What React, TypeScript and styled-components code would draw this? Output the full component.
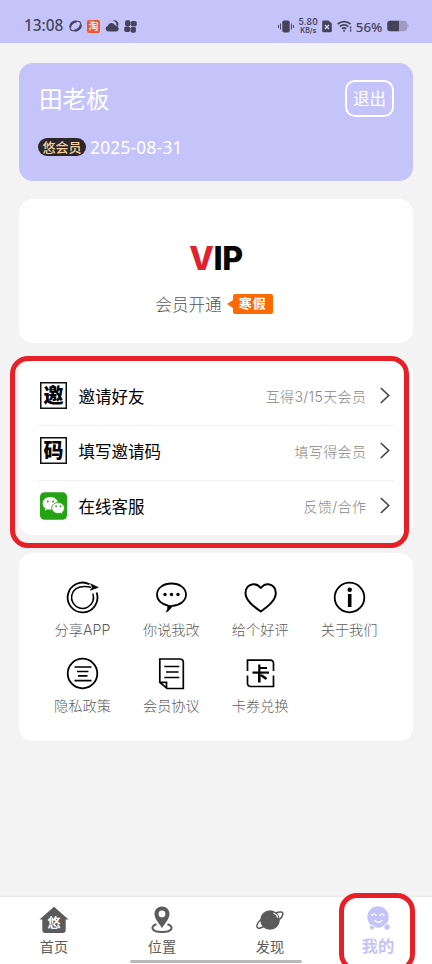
import React from "react";
import styled, { createGlobalStyle } from "styled-components";

const LILAC = "#c5c4fa";
const INK = "#45435c";
const NAV = "#5b5b5b";

const Global = createGlobalStyle`
  * { box-sizing: border-box; }
  html, body { margin: 0; height: 100%; overflow: hidden; }
  body { font-family: "Noto Sans CJK SC", sans-serif; background: #f3f3f3; }
  svg { display: block; flex: none; }
`;

const Screen = styled.div`
  position: relative;
  width: 432px;
  height: 964px;
  overflow: hidden;
  display: flex;
  flex-direction: column;
  background: #f3f3f3;
`;

const StatusBar = styled.header`
  height: 43px;
  flex: none;
  display: flex;
  justify-content: space-between;
  align-items: flex-start;
  padding: 14px 23px 0 24px;
  background: ${LILAC};
  color: ${INK};
`;
const StatusGroup = styled.div<{ $gap: number }>`
  display: flex;
  align-items: center;
  height: 24px;
  gap: ${(p) => p.$gap}px;
`;
const Clock = styled.span`
  width: 40px;
  font: 500 15.4px/24px "Noto Sans", sans-serif;
  white-space: nowrap;
`;
const Speed = styled.div`
  width: 20px;
  display: flex;
  flex-direction: column;
  align-items: center;
  font-family: Inter, sans-serif;
  font-weight: 600;
  white-space: nowrap;
`;
const SpeedValue = styled.span`
  font-size: 8.4px;
  line-height: 9px;
  letter-spacing: 0.3px;
`;
const SpeedUnit = styled.span`
  font-size: 7px;
  line-height: 8px;
`;
const Percent = styled.span`
  width: 27px;
  font: 500 13.3px/24px "Noto Sans", sans-serif;
  padding-top: 1px;
  white-space: nowrap;
`;

const Content = styled.main`
  flex: 1;
  display: flex;
  flex-direction: column;
  gap: 18px;
  padding: 19.5px 19px 0;
`;
const Card = styled.section<{ $h: number }>`
  height: ${(p) => p.$h}px;
  border-radius: 14px;
  background: #fff;
`;
const Profile = styled(Card)`
  display: flex;
  justify-content: space-between;
  align-items: flex-start;
  padding: 17px 19px 0 20px;
  background: ${LILAC};
  color: #fff;
`;
const UserName = styled.h1`
  margin: 2px 0 0;
  font-size: 23.5px;
  line-height: 32px;
  font-weight: 400;
`;
const Membership = styled.div`
  display: flex;
  align-items: center;
  gap: 4px;
  height: 24px;
  margin: 21px 0 0 -1px;
`;
const MemberBadge = styled.span`
  width: 48px;
  height: 18px;
  border-radius: 9px;
  background: #2b2728;
  color: #f6cf97;
  font-size: 13px;
  font-weight: 500;
  line-height: 17px;
  text-align: center;
`;
const Expiry = styled.span`
  font: 400 17.2px/24px "Noto Sans", sans-serif;
  letter-spacing: 0.3px;
  padding-top: 2px;
`;
const Logout = styled.button`
  width: 49px;
  height: 37px;
  padding: 0;
  border: 2px solid #fff;
  border-radius: 10px;
  background: none;
  color: #fff;
  font: 400 16.5px/32px "Noto Sans CJK SC", sans-serif;
`;

const VipCard = styled(Card)`
  display: flex;
  flex-direction: column;
  align-items: center;
  padding-top: 40px;
`;
const VipLogo = styled.div`
  font: 800 32px/40px Inter, sans-serif;
  letter-spacing: -0.3px;
  color: #060606;
`;
const VipAccent = styled.span`
  color: #e0222f;
`;
const VipLine = styled.div`
  display: flex;
  align-items: center;
  height: 24px;
  margin-top: 13px;
  padding-right: 4px;
`;
const VipText = styled.span`
  font-size: 16.6px;
  font-weight: 300;
  line-height: 24px;
  color: #555;
  margin-right: 5px;
`;
const Promo = styled.span`
  width: 40px;
  height: 20px;
  border-radius: 2px;
  background: #ff6a00;
  color: #fff;
  font: 700 13px/18px "Noto Sans CJK SC", sans-serif;
  letter-spacing: 1px;
  text-align: center;
`;

const MenuCard = styled(Card)`
  padding: 10px 19px 0;
`;
const MenuRow = styled.div`
  display: flex;
  align-items: center;
  height: 55.2px;
  padding: 0 4px 5px 2px;
  border-bottom: 1px solid #efefef;
  &:last-child { border-bottom-color: transparent; }
`;
const CharIcon = styled.span`
  width: 27px;
  height: 27px;
  box-shadow: inset 0 0 0 1.5px #111;
  font-size: 20px;
  font-weight: 900;
  line-height: 25.5px;
  text-align: center;
  color: #000;
`;
const MenuTitle = styled.span`
  flex: 1;
  margin-left: 11.5px;
  font-size: 16.5px;
  line-height: 24px;
  color: #000;
`;
const MenuHint = styled.span`
  margin-right: 13.7px;
  padding-top: 2px;
  font-family: Inter, "Noto Sans CJK SC", sans-serif;
  font-size: 14px;
  font-weight: 300;
  line-height: 24px;
  letter-spacing: 0.38px;
  color: #858585;
`;

const Tools = styled(Card)`
  display: grid;
  grid-template-columns: repeat(4, 88.9px);
  grid-auto-rows: 76px;
  padding: 28px 19px 0;
`;
const Tool = styled.div`
  display: flex;
  flex-direction: column;
  align-items: center;
`;
const ToolLabel = styled.span`
  margin-top: 4px;
  font-family: Inter, "Noto Sans CJK SC", sans-serif;
  font-size: 14.2px;
  font-weight: 300;
  line-height: 24px;
  color: #5c5c5c;
`;

const TabBar = styled.nav`
  height: 67.5px;
  flex: none;
  display: grid;
  grid-template-columns: repeat(4, 1fr);
  background: #fff;
  box-shadow: 0 -1px 2px rgba(0, 0, 0, 0.06);
`;
const Tab = styled.div<{ $active?: boolean }>`
  display: flex;
  flex-direction: column;
  align-items: center;
  padding-top: 8.5px;
  font-size: ${(p) => (p.$active ? 16.4 : 14.2)}px;
  font-weight: ${(p) => (p.$active ? 700 : 400)};
  line-height: ${(p) => (p.$active ? 21 : 22)}px;
  color: ${(p) => (p.$active ? LILAC : NAV)};
`;
const HomeIndicator = styled.div`
  position: absolute;
  left: 130px;
  bottom: 1px;
  width: 172px;
  height: 3px;
  border-radius: 2px;
  background: #b9b9b9;
`;
const Highlight = styled.div<{ $x: number; $y: number; $w: number; $h: number }>`
  position: absolute;
  left: ${(p) => p.$x}px;
  top: ${(p) => p.$y}px;
  width: ${(p) => p.$w}px;
  height: ${(p) => p.$h}px;
  border: 5px solid #e71f27;
  border-radius: 18px;
  pointer-events: none;
`;

const RingIcon = () => (
  <svg width="13" height="12" viewBox="0 0 13 12" fill="none" stroke={INK}>
    <ellipse cx="6.5" cy="6" rx="6" ry="3.6" transform="rotate(-38 6.5 6)" strokeWidth="1.1" />
    <path d="M1.2 7.5C1 4 4 1.300 7.500 1.300" strokeWidth="2.200" />
    <path d="M11.800 4.500C12 8 9 10.700 5.500 10.700" strokeWidth="2.200" />
  </svg>
);
const TaoIcon = styled.span`
  width: 13px;
  height: 13px;
  border-radius: 2px;
  background: #f2562b;
  color: #fff;
  font-size: 10px;
  font-weight: 500;
  line-height: 11px;
  text-align: center;
`;
const CloudIcon = () => (
  <svg width="14" height="12" viewBox="0 0 14 12" fill={INK}>
    <path d="M3 11.500a2.800 2.800 0 0 1-.3-5.500A4 4 0 0 1 10.300 5.500a3 3 0 0 1 .7 6z" />
    <path d="M7.500.8a3.900 3.900 0 0 1 5.300 5.400l-1.300-.9A4.500 4.500 0 0 0 7.500.8z" />
  </svg>
);
const PinwheelIcon = () => (
  <svg width="13" height="13" viewBox="0 0 13 13" fill={INK}>
    <rect x="1.100" y=".3" width="5.300" height="5.900" rx="1.600" />
    <rect x="6.800" y="1" width="5.900" height="5.300" rx="1.600" />
    <rect x=".3" y="6.600" width="5.900" height="5.300" rx="1.600" />
    <rect x="6.600" y="6.800" width="5.300" height="5.900" rx="1.600" />
  </svg>
);
const VibrateIcon = () => (
  <svg width="16" height="13" viewBox="0 0 16 13" fill={INK}>
    <rect x="4.300" y=".5" width="7.400" height="12" rx="1.800" />
    <path d="M2.600 3.500v6M.6 5v3M13.400 3.500v6M15.400 5v3" stroke={INK} strokeWidth="1" />
  </svg>
);
const SimIcon = () => (
  <svg width="10" height="13" viewBox="0 0 10 13">
    <path d="M1.500.6H6.500L9.800 3.500V11a1.300 1.300 0 0 1-1.300 1.300H1.500A1.300 1.300 0 0 1 .2 11V2A1.300 1.300 0 0 1 1.500.6z" fill={INK} />
    <path d="M3 5l4 4M7 5L3 9" stroke="#dddcff" strokeWidth="1.200" />
  </svg>
);
const WifiIcon = () => (
  <svg width="15" height="12" viewBox="0 0 15 12" fill="none" stroke={INK} strokeWidth="1.700">
    <path d="M.7 4.200a9 9 0 0 1 12.800 0M2.900 6.600a6 6 0 0 1 8.400 0M5 8.900a3 3 0 0 1 4.200 0" />
    <circle cx="7.100" cy="10.800" r=".6" fill={INK} strokeWidth="1" />
    <path d="M13.600 6.500v2M13.600 9.500v2" strokeWidth="1.500" />
  </svg>
);
const BatteryIcon = () => (
  <svg width="22" height="12" viewBox="0 0 22 12">
    <rect x=".3" y=".7" width="19.700" height="10.600" rx="2.800" fill="#9d9bc6" />
    <path d="M3.100.7H12v10.600H3.100A2.800 2.800 0 0 1 .3 8.500v-5A2.800 2.800 0 0 1 3.100.7z" fill={INK} />
    <path d="M20.400 4a2.300 2.300 0 0 1 0 4z" fill="#9d9bc6" />
  </svg>
);
const PromoArrow = () => (
  <svg width="6" height="8" viewBox="0 0 6 8">
    <path d="M0 4L6 0v8z" fill="#ff6a00" />
  </svg>
);
const Chevron = () => (
  <svg width="10" height="17" viewBox="0 0 10 17" fill="none" stroke="#444" strokeWidth="1.600">
    <path d="M.8 1L8.700 8.500.8 16" />
  </svg>
);
const WeChatIcon = () => (
  <svg width="27" height="28" viewBox="0 0 27 28">
    <rect y=".3" width="27" height="27.400" rx="4.500" fill="#25a315" />
    <path d="M10.300 5C5.900 5 2.700 7.800 2.700 11.400c0 2 1 3.700 2.700 4.900l-.6 2.400 2.700-1.400c1 .3 1.900.4 2.800.4 4.300 0 7.700-2.800 7.700-6.300S14.600 5 10.300 5z" fill="#fff" />
    <path d="M18.200 10.500c-3.700 0-6.500 2.500-6.500 5.500s2.800 5.500 6.500 5.500c.8 0 1.600-.1 2.300-.3l2.200 1.200-.5-2c1.400-1.100 2.300-2.600 2.300-4.400 0-3-2.700-5.500-6.300-5.500z" fill="#fff" stroke="#25a315" strokeWidth=".9" />
    <g fill="#25a315">
      <circle cx="7.800" cy="9.400" r="1" /><circle cx="13" cy="9.400" r="1" />
      <circle cx="16.100" cy="14.200" r=".9" /><circle cx="20.500" cy="14.200" r=".9" />
    </g>
  </svg>
);

const ShareIcon = () => (
  <svg width="33" height="33" viewBox="0 0 33 33" fill="none" stroke="#000" strokeWidth="1.800">
    <path d="M30.600 11.500A14.900 14.900 0 1 1 23.500 3.300" />
    <path d="M26.800 12.500A11 11 0 1 1 10 7.600C14.500 5 20 5.200 25 6.200" strokeWidth="1.500" />
    <path d="M24.500 2.700L32.300 6.400 24.300 9.300 26.300 6.200z" fill="#000" strokeWidth=".6" />
  </svg>
);
const ChatIcon = () => (
  <svg width="33" height="33" viewBox="0 0 33 33" fill="none" stroke="#000" strokeWidth="1.800">
    <path d="M12.800 24.500C6.500 23.500 2 19 2 13.600 2 7.200 8.300 2.500 16.500 2.500S31 7.200 31 13.600 24.700 24.500 17 24.800" />
    <path d="M12.500 24.300L17.500 24.500C16 27.500 14 30 11 31.200c1.500-2.200 2-4.400 1.500-6.900z" fill="#000" strokeWidth=".6" />
    <g fill="#000" stroke="none"><circle cx="10" cy="13.500" r="1.700" /><circle cx="16.500" cy="13.500" r="1.700" /><circle cx="23" cy="13.500" r="1.700" /></g>
  </svg>
);
const HeartIcon = () => (
  <svg width="33" height="33" viewBox="0 0 33 33" fill="none" stroke="#000" strokeWidth="2" strokeLinejoin="round">
    <path d="M16.800 7C14.500 4 11.500 3 9 3.200 4.500 3.500 1.500 7.200 1.500 12c0 7.500 8.300 13.500 15.300 18.500C23.800 25.500 31.800 19.500 31.800 12c0-4.800-3-8.500-7.300-8.800-2.500-.2-5.400.8-7.700 3.800z" />
  </svg>
);
const InfoIcon = () => (
  <svg width="33" height="33" viewBox="0 0 33 33">
    <circle cx="16.500" cy="16.500" r="14.800" fill="none" stroke="#000" strokeWidth="1.800" />
    <circle cx="16.700" cy="8.800" r="2.200" />
    <rect x="14.900" y="13" width="3.600" height="13" />
  </svg>
);
const PrivacyIcon = () => (
  <svg width="33" height="33" viewBox="0 0 33 33" fill="none" stroke="#000" strokeWidth="1.800">
    <circle cx="16.500" cy="16.500" r="14.800" />
    <path d="M8.500 10h17M11 14.500h11.500M12 18.800h9.500M8.500 23.700h17" strokeWidth="1.700" />
  </svg>
);
const DocIcon = () => (
  <svg width="33" height="33" viewBox="0 0 33 33" fill="none" stroke="#000" strokeWidth="1.700">
    <path d="M4.800 2H25a3.300 3.300 0 0 1 3.300 3.300V31.500H12L4.800 25.300zM4.800 25.300H11.500V31.200" />
    <path d="M9.300 9.500h15M11 15h12.500M9.300 20.500h15" strokeWidth="1.600" />
  </svg>
);
const CouponIcon = () => (
  <svg width="33" height="33" viewBox="0 0 33 33" fill="none" stroke="#000" strokeWidth="1.700">
    <path d="M3.500 14V3.200H26.500a3 3 0 0 1 3 3V14M3.500 18.500V26.500a3 3 0 0 0 3 3H29.500V18.500" />
    <path d="M15.300 7.500V15M15.300 11H23" strokeWidth="2.200" />
    <path d="M8.500 15.600H25" strokeWidth="2.200" />
    <path d="M15.300 15.500V25.500M17 18L22.500 22" strokeWidth="2.600" />
  </svg>
);

const HomeIcon = () => (
  <svg width="30" height="30" viewBox="0 0 30 30">
    <path d="M15 1.800L29.500 14.500H26.700V25a3 3 0 0 1-3 3H6.300a3 3 0 0 1-3-3V14.500H.5z" fill={NAV} />
    <text x="15" y="22" fill="#fff" fontSize="13" fontWeight="700" textAnchor="middle" fontFamily="Noto Sans CJK SC">悠</text>
  </svg>
);
const PinIcon = () => (
  <svg width="30" height="30" viewBox="0 0 30 30">
    <path d="M9.500 19.300C2.500 21.500 4.500 27 15 27S27.500 21.500 20.500 19.300" fill="none" stroke={NAV} strokeWidth="2" />
    <path fillRule="evenodd" d="M15 1.500c-4.300 0-7.500 3.200-7.500 7.300 0 4.900 4 8.700 7.500 14.400 3.500-5.700 7.500-9.500 7.500-14.400 0-4.100-3.200-7.300-7.500-7.300zm0 4a3.400 3.400 0 1 1 0 6.800 3.400 3.400 0 0 1 0-6.800z" fill={NAV} />
  </svg>
);
const PlanetIcon = () => (
  <svg width="30" height="30" viewBox="0 0 30 30">
    <circle cx="15" cy="15" r="9.800" fill={NAV} />
    <path d="M5.800 14.500C1.500 18.500.8 22.700 3.500 23.200 5.500 23.500 8 22 10.500 20.500M20 8.300C25 6 28.500 6.800 27.900 9.300c-.4 1.800-1.700 3.800-3.900 5.500" fill="none" stroke={NAV} strokeWidth="1.500" />
    <path d="M18.500 8c2.300 1 3.700 2.500 4.300 4.700" fill="none" stroke="#fff" strokeWidth="1.300" />
  </svg>
);
const FaceIcon = () => (
  <svg width="30" height="30" viewBox="0 0 30 30">
    <circle cx="15" cy="12" r="10.700" fill={LILAC} />
    <path d="M9 10.300c1.200-2 3-2 4.200 0M17 10.300c1.200-2 3-2 4.200 0M12 15.600c2 2.200 5 2.200 7 0" fill="none" stroke="#fff" strokeWidth="1.300" strokeLinecap="round" />
    <circle cx="9" cy="22.500" r="2.500" fill={LILAC} stroke="#fff" strokeWidth=".8" />
    <circle cx="24" cy="22" r="3.200" fill={LILAC} stroke="#fff" strokeWidth=".8" />
  </svg>
);

const menu = [
  { icon: <CharIcon>邀</CharIcon>, title: "邀请好友", hint: "互得3/15天会员" },
  { icon: <CharIcon>码</CharIcon>, title: "填写邀请码", hint: "填写得会员" },
  { icon: <WeChatIcon />, title: "在线客服", hint: "反馈/合作" },
];
const tools = [
  { icon: <ShareIcon />, label: "分享APP" },
  { icon: <ChatIcon />, label: "你说我改" },
  { icon: <HeartIcon />, label: "给个好评" },
  { icon: <InfoIcon />, label: "关于我们" },
  { icon: <PrivacyIcon />, label: "隐私政策" },
  { icon: <DocIcon />, label: "会员协议" },
  { icon: <CouponIcon />, label: "卡券兑换" },
];
const tabs = [
  { icon: <HomeIcon />, label: "首页" },
  { icon: <PinIcon />, label: "位置" },
  { icon: <PlanetIcon />, label: "发现" },
  { icon: <FaceIcon />, label: "我的", active: true },
];

export default function App() {
  return (
    <Screen>
      <Global />
      <StatusBar>
        <StatusGroup $gap={5}>
          <Clock>13:08</Clock>
          <RingIcon />
          <TaoIcon>淘</TaoIcon>
          <CloudIcon />
          <PinwheelIcon />
        </StatusGroup>
        <StatusGroup $gap={4.2}>
          <VibrateIcon />
          <Speed>
            <SpeedValue>5.80</SpeedValue>
            <SpeedUnit>KB/s</SpeedUnit>
          </Speed>
          <SimIcon />
          <WifiIcon />
          <Percent>56%</Percent>
          <BatteryIcon />
        </StatusGroup>
      </StatusBar>
      <Content>
        <Profile $h={118.5}>
          <div>
            <UserName>田老板</UserName>
            <Membership>
              <MemberBadge>悠会员</MemberBadge>
              <Expiry>2025-08-31</Expiry>
            </Membership>
          </div>
          <Logout>退出</Logout>
        </Profile>
        <VipCard $h={144}>
          <VipLogo><VipAccent>V</VipAccent>IP</VipLogo>
          <VipLine>
            <VipText>会员开通</VipText>
            <PromoArrow />
            <Promo>寒假</Promo>
          </VipLine>
        </VipCard>
        <MenuCard $h={174}>
          {menu.map((m) => (
            <MenuRow key={m.title}>
              {m.icon}
              <MenuTitle>{m.title}</MenuTitle>
              <MenuHint>{m.hint}</MenuHint>
              <Chevron />
            </MenuRow>
          ))}
        </MenuCard>
        <Tools $h={188}>
          {tools.map((t) => (
            <Tool key={t.label}>
              {t.icon}
              <ToolLabel>{t.label}</ToolLabel>
            </Tool>
          ))}
        </Tools>
      </Content>
      <TabBar>
        {tabs.map((t) => (
          <Tab key={t.label} $active={t.active}>
            {t.icon}
            <span>{t.label}</span>
          </Tab>
        ))}
      </TabBar>
      <HomeIndicator />
      <Highlight $x={10} $y={356} $w={399} $h={192} />
      <Highlight $x={339} $y={893} $w={76} $h={79} />
    </Screen>
  );
}
